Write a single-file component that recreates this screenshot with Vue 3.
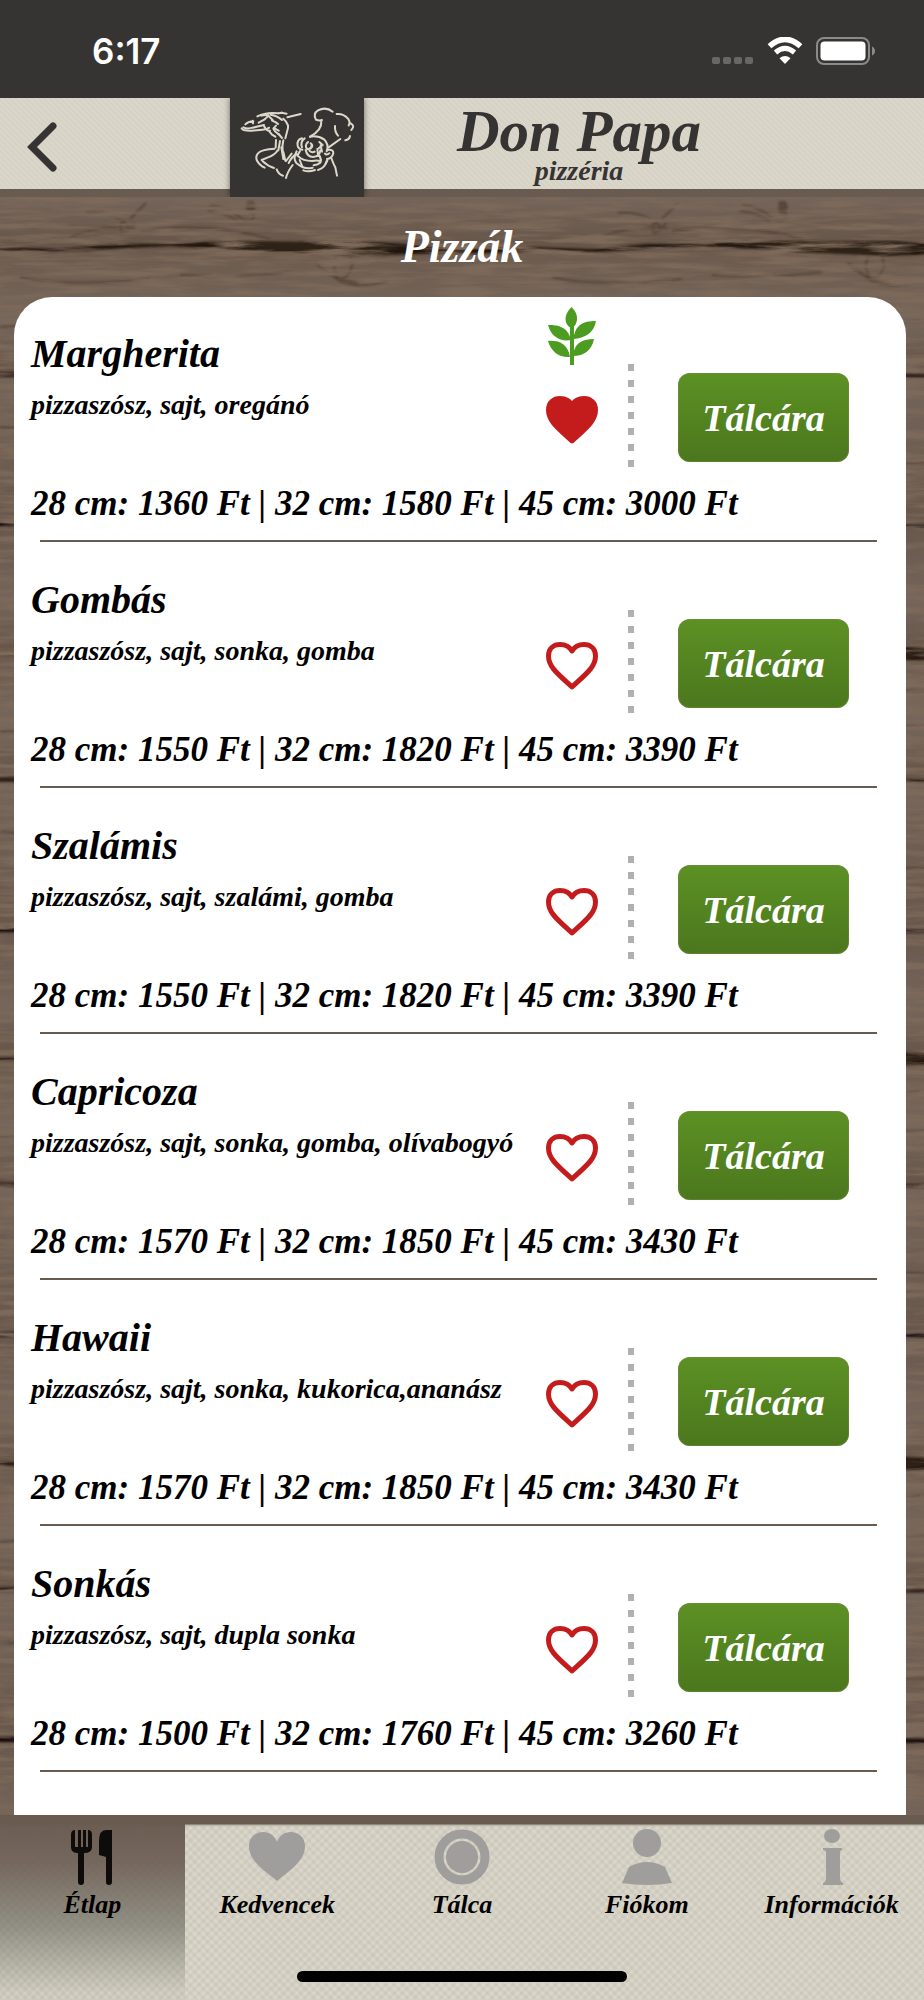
<template>
  <div class="app">
    <div class="status-bar">
      <span class="time">6:17</span>
      <div class="status-icons">
        <svg width="42" height="28" viewBox="0 0 42 28" fill="#686764">
          <rect v-for="n in 4" :key="n" :x="(n - 1) * 11" y="20" width="8" height="7" rx="2" />
        </svg>
        <svg width="36" height="28" viewBox="0 0 36 28" fill="none" stroke="#fff">
          <path d="M2.500 9.200Q18-4.600 33.500 9.200" stroke-width="5.500" />
          <path d="M8.500 15.500Q18 7.200 27.500 15.500" stroke-width="5" />
          <path d="M18 27l-5.500-5.800Q18 16.600 23.500 21.200z" fill="#fff" stroke="none" />
        </svg>
        <svg width="60" height="28" viewBox="0 0 60 28">
          <rect x="1" y="1" width="52" height="26" rx="7" fill="none" stroke="#8b8a88" stroke-width="2" />
          <rect x="4.500" y="4.500" width="45" height="19" rx="4" fill="#fff" />
          <path d="M56 9.500q3 1.500 3 4.500t-3 4.500z" fill="#8b8a88" />
        </svg>
      </div>
    </div>

    <header class="header">
      <button class="back" aria-label="Vissza">
        <svg width="32" height="52" viewBox="0 0 32 52" fill="none" stroke="#363432" stroke-width="7" stroke-linecap="round">
          <path d="M26 5L5 26l21 21" />
        </svg>
      </button>
      <div class="logo">
        <svg viewBox="30 22 402 297" fill="none" stroke="#ddd8cb" stroke-width="6" stroke-linecap="round" stroke-linejoin="round">
          <!-- kéz és pizza -->
          <path d="M65 113q3 8 30 7l32-3q14-1 20-6" />
          <path d="M76 101q8-8 24-9M98 90l1 8M70 110q12 6 28 1l34-8" />
          <path d="M112 77q28-14 62-9M124 75q12-4 20-1l14 14M146 74l-12 12-18 10" />
          <path d="M152 72q20 3 34 16M184 66l16 3M202 80l40-10M176 68l10-2" />
          <path d="M190 84q10 8 14 20v8l-8 31M156 90q12 4 18 10M168 105l-8 9q4 10 16 17" />
          <path d="M132 106q8 16 18 14M148 122l8 10 10 6M176 130l10 12M162 112l14 8" />
          <!-- ujj -->
          <path d="M168 148l-1 22M180 151l-5 28M190 149q-4 18-2 30l2 18" />
          <path d="M164 174q-38 2-48 12-10 8-6 22 8 16 24 23M172 180q-8 13-28 20l-19 8" />
          <path d="M128 212q16 15 34 20M184 170l6 35M190 184l6 26M170 236q6 16 19 19M198 262q4-18 20-39" />
          <path d="M198 211l17-22M206 217q10-20 24-27" />
          <!-- sapka -->
          <path d="M288 87q-10-18 6-28 24-12 44 4M288 87q10 4 18 1M304 91q2 28-34 47" />
          <path d="M350 70q20-2 34 14 8 11 2 20M392 98q14 8 2 20M345 106q-1 18 9 29M376 149q12-2 14-13" />
          <!-- arc -->
          <path d="M246 143q-16 4-13 22 3 11 14 12M254 143q-14 10-8 27M270 138q24-4 42 8 16 15 8 36" />
          <path d="M264 154q-12 10-2 22 13-2 13-14M272 158q10 6 0 16M298 154l10 9-12 10M302 164l4 19" />
          <path d="M257 178q4 20 22 21 20-2 22-20M268 180q8 8 16 3M292 175l2 18 6 4" />
          <path d="M230 182q-12 22-1 35 24 21 49 14M240 181l-8 14M236 198q12 13 40 13 15-3 25 0M300 200q6 9 0 17" />
          <path d="M247 228l-8-20M250 239q16 6 35-1M294 238q22-6 27-29M281 224q14-2 19-8" />
          <path d="M326 170l35-25M322 178q19-3 18 10-4 16-19 17M328 188q-9 7-13 1M322 210l-5 8" />
          <path d="M334 202q8 22 12 28l5 25" />
        </svg>
      </div>
      <div class="brand">
        <span class="brand-name">Don Papa</span>
        <span class="brand-sub">pizzéria</span>
      </div>
    </header>

    <main class="content">
      <svg class="wood" width="100%" height="100%" aria-hidden="true">
        <defs>
          <filter id="grain" x="0" y="0" width="100%" height="100%">
            <feTurbulence type="fractalNoise" baseFrequency=".016 .15" numOctaves="5" seed="8" />
            <feColorMatrix values="0 0 0 0 .2  0 0 0 0 .14  0 0 0 0 .1  3 0 0 0 -1.150" />
          </filter>
          <filter id="soft"><feGaussianBlur stdDeviation="1" /></filter>
          <linearGradient id="plank" x1="0" y1="0" x2="0" y2="1">
            <stop offset="0" stop-color="#74645a" />
            <stop offset=".12" stop-color="#665548" />
            <stop offset=".14" stop-color="#6c5b4e" />
            <stop offset=".3" stop-color="#75665b" />
            <stop offset=".43" stop-color="#665548" />
            <stop offset=".45" stop-color="#736459" />
            <stop offset=".8" stop-color="#68574b" />
            <stop offset="1" stop-color="#74645a" />
          </linearGradient>
          <pattern id="planks" width="532" height="405" patternUnits="userSpaceOnUse">
            <rect width="532" height="405" fill="url(#plank)" />
            <g filter="url(#soft)">
              <path d="M-4 50L60 52 115 47 170 47q60-5 100-2l90-1q60 5 176 6v4q-84 4-118 3l-60 2-88-4-100-6-45 2-60 4-69-2z" fill="#241710" />
              <path d="M210 47q60-5 100-1 60-3 90 5l-30 7-80-2z" fill="#2f2119" />
              <path d="M-4 175l120 1 130-1 150 2 140-2v4l-150 2-130-1-130 1-130-1z" fill="#33241b" />
              <path d="M-4 325l150 1 120-1 130 2 140-2v5l-140 1-130-1-140 1-130-1z" fill="#17100c" />
            </g>
            <g fill="none" stroke="#3c2a1e" stroke-width="2" opacity=".5" filter="url(#soft)">
              <path d="M86 16q20-2 34 7l12 9M126 24q-8 2-4 12 8-2 12-10M130 22q8-8 16-16M70 40q34-14 66-8" />
              <path d="M210 8q18 2 32 14 14 4 12-6M208 14q18 2 30 10" />
              <path d="M248 5q-3 12 4 11 5-5 1-11z" fill="#3c2a1e" />
              <path d="M336 60q-5 12 3 23 10-2 13-14l-2-12M316 66q14 16 42 20M328 74q16 22 60 10" />
              <path d="M140 34q70-10 130 8M20 80q40 10 130 2M180 78q60 4 110-3M0 130q120-12 230 4M280 120q90 10 240-4M0 230q120 10 250-4M200 270q150-10 320 2" />
            </g>
          </pattern>
        </defs>
        <rect width="100%" height="100%" fill="url(#planks)" />
        <rect width="100%" height="100%" filter="url(#grain)" />
      </svg>

      <h1 class="page-title">Pizzák</h1>

      <div class="card">
        <article v-for="pizza in pizzas" :key="pizza.name" class="item">
          <div class="item-main">
            <div class="item-text">
              <h2>{{ pizza.name }}</h2>
              <p>{{ pizza.toppings }}</p>
            </div>
            <div class="marks">
              <div class="veg">
                <svg v-if="pizza.vegetarian" width="48" height="58" viewBox="0 0 48 58" fill="#4d9c22">
                  <path d="M23.500 0c4 4 6 8 5.500 12 0 4-2 7-4.500 9h-2c-3-2-5-5-5-9 0-4 2-8 6-12z" />
                  <path d="M0 18c11 0 20 2 23 15C13 35 3 30 0 18zM48 14c-13 0-21 4-22.500 18C37 31 46 26 48 14z" />
                  <path d="M0 34c11-1 20 3 22 16C12 51 3 45 0 34zM46 32c-13 0-20 5-21 17C36 49 44 43 46 32z" />
                  <path d="M22 18h4v40h-4z" />
                </svg>
              </div>
              <button class="fav" :aria-label="'Kedvenc: ' + pizza.name" @click="pizza.favorite = !pizza.favorite">
                <svg width="52" height="48" viewBox="0 0 52 48">
                  <path
                    d="M26 45C12 32 2.500 25 2.500 14 2.500 6 8 2.500 14 2.500c6 0 10 3 12 6.500 2-3.500 6-6.500 12-6.500 6 0 11.500 3.500 11.500 11.500C49.500 25 40 32 26 45z"
                    :fill="pizza.favorite ? '#c41c1c' : '#fff'"
                    stroke="#c41c1c"
                    stroke-width="5"
                    stroke-linejoin="round"
                  />
                </svg>
              </button>
            </div>
            <div class="dots"></div>
            <button class="add">Tálcára</button>
          </div>
          <p class="prices">28 cm: {{ pizza.prices[0] }} Ft | 32 cm: {{ pizza.prices[1] }} Ft | 45 cm: {{ pizza.prices[2] }} Ft</p>
        </article>
        <article class="item">
          <div class="item-text">
            <h2>Songoku</h2>
          </div>
        </article>
      </div>
    </main>

    <nav class="tab-bar">
      <a v-for="(tab, i) in tabs" :key="tab.icon" href="#" class="tab" :class="{ active: i === 0 }">
        <svg class="tab-icon" width="56" height="56" viewBox="0 0 56 56">
          <g v-if="tab.icon === 'menu'">
            <path d="M11 1q-4 0-4 5v12q0 6 7 6v29q0 3 3 3t3-3V24q8 0 8-6V6q0-5-4-5v17h-2V1h-3v17h-2V1h-3v17h-3V1z" />
            <path d="M48 1v52q0 3-3 3t-3-3V28q-3-1-7-2V12q0-11 7-11z" />
          </g>
          <path v-else-if="tab.icon === 'heart'" d="M28 52C12 39 0 31 0 17 0 8 7 3 14 3c7 0 12 4 14 10C30 7 35 3 42 3c7 0 14 5 14 14 0 14-12 22-28 35z" />
          <g v-else-if="tab.icon === 'plate'">
            <circle cx="28" cy="28" r="23" fill="none" stroke="#9f9e9c" stroke-width="9" />
            <circle cx="28" cy="28" r="16" />
          </g>
          <g v-else-if="tab.icon === 'user'">
            <circle cx="28" cy="14" r="14" />
            <path d="M3 54l7-16q18-10 36 0l7 16q-25 4-50 0z" />
          </g>
          <g v-else>
            <ellipse cx="28" cy="7" rx="8" ry="7" />
            <path d="M19 19h19v2q-2 0-2 3v25q0 4 3 5v2H19v-2q3-1 3-5V24q0-3-3-3z" />
          </g>
        </svg>
        <span>{{ tab.label }}</span>
      </a>
      <div class="home-indicator"></div>
    </nav>
  </div>
</template>

<script setup>
import { ref } from 'vue'

const pizzas = ref([
  { name: 'Margherita', toppings: 'pizzaszósz, sajt, oregánó', prices: [1360, 1580, 3000], vegetarian: true, favorite: true },
  { name: 'Gombás', toppings: 'pizzaszósz, sajt, sonka, gomba', prices: [1550, 1820, 3390] },
  { name: 'Szalámis', toppings: 'pizzaszósz, sajt, szalámi, gomba', prices: [1550, 1820, 3390] },
  { name: 'Capricoza', toppings: 'pizzaszósz, sajt, sonka, gomba, olívabogyó', prices: [1570, 1850, 3430] },
  { name: 'Hawaii', toppings: 'pizzaszósz, sajt, sonka, kukorica,ananász', prices: [1570, 1850, 3430] },
  { name: 'Sonkás', toppings: 'pizzaszósz, sajt, dupla sonka', prices: [1500, 1760, 3260] }
])

const tabs = [
  { icon: 'menu', label: 'Étlap' },
  { icon: 'heart', label: 'Kedvencek' },
  { icon: 'plate', label: 'Tálca' },
  { icon: 'user', label: 'Fiókom' },
  { icon: 'info', label: 'Információk' }
]
</script>

<style>
body {
  margin: 0;
}
</style>

<style scoped>
.app {
  height: 100vh;
  display: flex;
  flex-direction: column;
  overflow: hidden;
  font-family: "Liberation Serif", serif;
  font-style: italic;
  font-weight: 700;
  color: #000;
}
button {
  font: inherit;
  border: none;
  background: none;
  padding: 0;
  cursor: pointer;
}
h1, h2, p {
  margin: 0;
  font-weight: inherit;
}
.status-bar {
  flex: none;
  height: 98px;
  display: flex;
  align-items: center;
  justify-content: space-between;
  padding: 3px 48px 0 92px;
  box-sizing: border-box;
  background: #363432;
  color: #fff;
}
.time {
  font: normal 600 35px "Inter", sans-serif;
}
.status-icons {
  display: flex;
  gap: 13px;
}
.header {
  position: relative;
  z-index: 1;
  flex: none;
  height: 91px;
  display: grid;
  grid-template-columns: 230fr 134px 560fr;
  border-bottom: 8px solid #6a5b51;
  background: repeating-linear-gradient(45deg, #dad6ca 0 2px, #d6d2c6 2px 4px);
}
.back {
  justify-self: start;
  padding: 10px 28px 0 27px;
}
.logo {
  margin-bottom: -8px;
  background: #363432;
  box-shadow: 0 0 6px rgba(0, 0, 0, 0.5);
  clip-path: inset(0 -8px 0 -8px);
}
.logo svg {
  display: block;
  width: 100%;
  height: 100%;
}
.brand {
  display: flex;
  flex-direction: column;
  align-items: center;
  padding: 3px 130px 0 0;
  color: #363432;
}
.brand-name {
  font-size: 59px;
  line-height: 60px;
}
.brand-sub {
  font-size: 28px;
  line-height: 20px;
}
.content {
  position: relative;
  flex: 1;
  min-height: 0;
  display: flex;
  flex-direction: column;
}
.wood {
  position: absolute;
  inset: 0;
  z-index: -1;
}
.page-title {
  flex: none;
  font-size: 46px;
  line-height: 100px;
  text-align: center;
  color: #fff;
}
.card {
  flex: 1;
  min-height: 0;
  margin: 0 18px 0 14px;
  border-radius: 38px 38px 0 0;
  background: #fff;
  overflow-y: auto;
  scrollbar-width: none;
}
.item {
  padding: 0 17px 1px;
}
.item:not(:last-child)::after {
  content: "";
  display: block;
  height: 2px;
  margin: 14px 12px 0 9px;
  background: #6a5b51;
}
.item-main {
  display: flex;
  height: 180px;
  padding-right: 40px;
}
.item-text {
  flex: 1;
  min-width: 0;
  padding-top: 33px;
}
.item-text h2 {
  font-size: 40px;
  line-height: 48px;
}
.item-text p {
  margin-top: 7px;
  font-size: 28px;
  line-height: 40px;
  white-space: nowrap;
}
.marks {
  width: 52px;
  padding-top: 10px;
}
.veg {
  height: 58px;
  margin-bottom: 31px;
  text-align: center;
}
.fav, .fav svg {
  display: block;
}
.dots {
  width: 6px;
  height: 106px;
  margin: 67px 44px 0 30px;
  background: repeating-linear-gradient(#b0b0b0 0 7px, transparent 7px 16px);
}
.add {
  width: 171px;
  height: 89px;
  margin-top: 76px;
  border-radius: 12px;
  background: linear-gradient(#5c9124, #4b771d);
  box-shadow: inset 0 0 1px 1px rgba(120, 140, 70, 0.5);
  color: #fff;
  font-size: 38px;
}
.prices {
  padding-top: 5px;
  font-size: 35px;
  line-height: 44px;
  white-space: nowrap;
}
.tab-bar {
  position: relative;
  flex: none;
  height: 185px;
  display: grid;
  grid-template-columns: repeat(5, 1fr);
  background:
    linear-gradient(#6a5b51, #6a5b51 9px, #b5b0a5 10px, transparent 12px),
    repeating-linear-gradient(45deg, rgba(120, 115, 95, 0.07) 0 3px, transparent 3px 6px),
    repeating-linear-gradient(-45deg, rgba(120, 115, 95, 0.07) 0 3px, transparent 3px 6px),
    #dad6ca;
}
.tab {
  display: flex;
  flex-direction: column;
  align-items: center;
  padding-top: 14px;
  color: #000;
  font-size: 26px;
  line-height: 40px;
  text-decoration: none;
}
.tab.active {
  background: linear-gradient(#6a5b51, rgba(106, 91, 81, 0.9) 25%, rgba(100, 100, 90, 0.6) 60%, rgba(150, 150, 135, 0.1) 96%);
}
.tab-icon {
  fill: #9f9e9c;
}
.tab.active .tab-icon {
  fill: #0d0c0b;
}
.home-indicator {
  position: absolute;
  left: 50%;
  bottom: 18px;
  width: 330px;
  height: 11px;
  margin-left: -165px;
  border-radius: 6px;
  background: #000;
}
</style>
